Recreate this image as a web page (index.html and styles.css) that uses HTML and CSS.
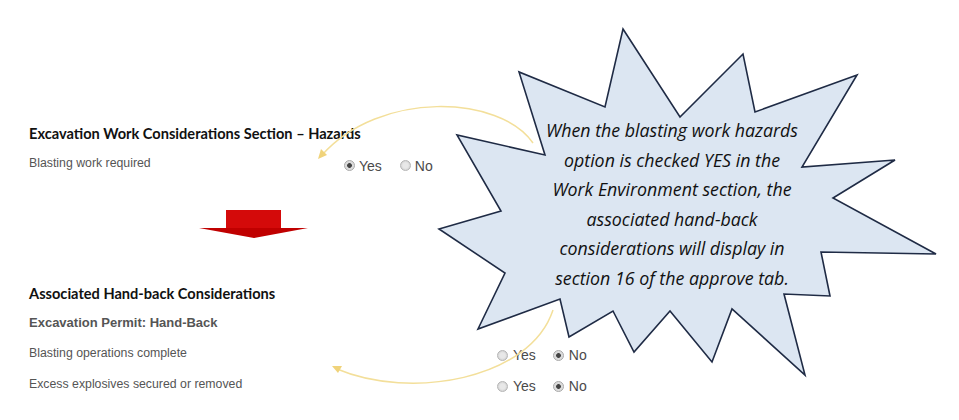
FILE: index.html
```html
<!DOCTYPE html>
<html>
<head>
<meta charset="utf-8">
<link rel="stylesheet" href="styles.css">
</head>
<body>
<div class="page">
  <div class="form">
    <div class="h-main">Excavation Work Considerations Section – Hazards</div>
    <div class="row row-top">
      <div class="label">Blasting work required</div>
      <div class="radios">
        <span class="opt"><span class="radio on"></span>Yes</span>
        <span class="opt"><span class="radio"></span>No</span>
      </div>
    </div>
    <div class="down-arrow">
      <svg width="110" height="29" viewBox="0 0 110 29"><polygon points="27,0 82,0 82,18 109,18 55,28 0,18 27,18" fill="#c00000"/><rect x="27" y="0" width="55" height="18" fill="#d40a0a"/></svg>
    </div>
    <div class="h-main h-second">Associated Hand-back Considerations</div>
    <div class="h-sub">Excavation Permit: Hand-Back</div>
    <div class="row row-bottom first">
      <div class="label">Blasting operations complete</div>
      <div class="radios">
        <span class="opt"><span class="radio"></span>Yes</span>
        <span class="opt"><span class="radio on"></span>No</span>
      </div>
    </div>
    <div class="row row-bottom second">
      <div class="label">Excess explosives secured or removed</div>
      <div class="radios">
        <span class="opt"><span class="radio"></span>Yes</span>
        <span class="opt"><span class="radio on"></span>No</span>
      </div>
    </div>
  </div>

  <svg class="curves" width="959" height="420" viewBox="0 0 959 420">
    <path d="M533,143 C500,95 380,90 322,155" fill="none" stroke="#f3df9a" stroke-width="1.5"/>
    <polygon points="318,159 321,149 327,155" fill="#f0d37a"/>
    <path d="M553,310 C530,380 410,400 337,369" fill="none" stroke="#f3df9a" stroke-width="1.5"/>
    <polygon points="332,366 342,366 338,373" fill="#f0d37a"/>
  </svg>

  <div class="callout">
    <svg class="star" width="520" height="370" viewBox="430 20 520 370">
      <polygon points="623,29 680,117 743,54 755,112 857,75 802,167 895,160 833,198 936,254 821,252 830,296 784,294 805,375 732,309 712,362 670,311 634,352 613,311 569,337 560,299 478,329 505,273 439,229 501,211 457,135 545,155 519,72 605,107" fill="#dce6f2" stroke="#1f2b45" stroke-width="1.6" stroke-linejoin="miter"/>
    </svg>
    <div class="callout-text">
      <span>When the blasting work hazards</span>
      <span>option is checked YES in the</span>
      <span>Work Environment section, the</span>
      <span>associated hand-back</span>
      <span>considerations will display in</span>
      <span>section 16 of the approve tab.</span>
    </div>
  </div>
</div>
</body>
</html>
```

FILE: styles.css
```css
html, body {
  margin: 0;
  padding: 0;
  background: #ffffff;
}

.page {
  position: relative;
  width: 959px;
  height: 420px;
  overflow: hidden;
  font-family: "Liberation Sans", Arial, sans-serif;
}

.form {
  padding: 124px 0 0 29px;
}

.h-main {
  font-family: Lato, "Liberation Sans", sans-serif;
  font-weight: 700;
  font-size: 14.6px;
  line-height: 20px;
  height: 20px;
  color: #111111;
  white-space: nowrap;
}

.h-second {
  margin-top: 45px;
}

.h-sub {
  margin-top: 9px;
  font-family: "Liberation Sans", Arial, sans-serif;
  font-weight: 700;
  font-size: 13px;
  line-height: 20px;
  height: 20px;
  color: #555555;
}

.row {
  display: flex;
  align-items: center;
  height: 20px;
}

.row-top {
  margin-top: 9px;
}

.row-top .label {
  width: 315px;
}

.row-bottom .label {
  width: 468px;
}

.row-bottom.first {
  margin-top: 10px;
}

.row-bottom.second {
  margin-top: 11px;
}

.label {
  font-size: 12.3px;
  color: #555555;
  white-space: nowrap;
  flex: none;
}

.radios {
  display: flex;
  gap: 18px;
  padding-top: 5px;
  font-size: 14px;
  color: #4a4a4a;
}

.row-bottom .radios {
  padding-top: 4px;
  gap: 17px;
}

.opt {
  display: flex;
  align-items: center;
  gap: 4px;
}

.row-bottom .opt {
  gap: 5px;
}

.radio {
  width: 9px;
  height: 9px;
  border-radius: 50%;
  border: 1px solid #b5b5b5;
  background: radial-gradient(circle, #e8e8e8 0 40%, #d6d6d6 70%, #cfcfcf 100%);
  position: relative;
  flex: none;
}

.radio.on {
  background: radial-gradient(circle, #444444 0 32%, #d8d8d8 42%, #e6e6e6 100%);
  border-color: #a8a8a8;
}

.down-arrow {
  margin-top: 37px;
  margin-left: 170px;
  height: 29px;
}

.down-arrow svg {
  display: block;
}

.curves {
  position: absolute;
  left: 0;
  top: 0;
}

.callout {
  position: absolute;
  left: 430px;
  top: 20px;
  width: 520px;
  height: 370px;
}

.star {
  position: absolute;
  left: 0;
  top: 0;
  overflow: visible;
}

.callout-text {
  position: absolute;
  left: 72px;
  top: 96px;
  width: 340px;
  display: flex;
  flex-direction: column;
  align-items: center;
  font-family: "Open Sans", sans-serif;
  font-style: italic;
  font-size: 17.8px;
  line-height: 29.6px;
  color: #111111;
  white-space: nowrap;
}
```
